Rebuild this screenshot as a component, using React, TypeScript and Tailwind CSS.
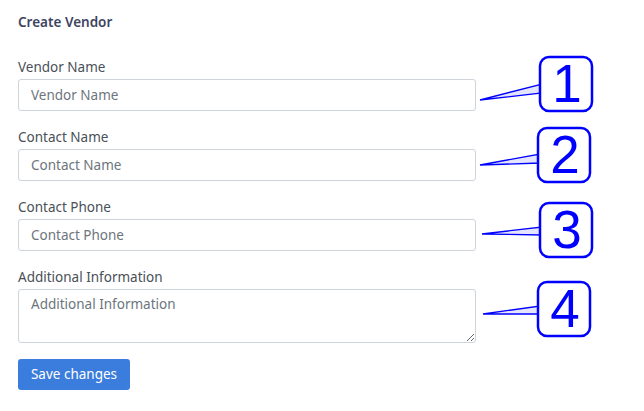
import React from 'react';

type Callout = {
  n: string;
  x: number;
  y: number;
  tipX: number;
  tipY: number;
  baseTop: number;
  baseBottom: number;
};

const callouts: Callout[] = [
  { n: '1', x: 540, y: 57, tipX: 480, tipY: 100, baseTop: 84, baseBottom: 93 },
  { n: '2', x: 538, y: 128, tipX: 480, tipY: 165, baseTop: 154, baseBottom: 163 },
  { n: '3', x: 540, y: 203, tipX: 482, tipY: 234, baseTop: 227, baseBottom: 235 },
  { n: '4', x: 538, y: 282, tipX: 483, tipY: 314, baseTop: 306, baseBottom: 314 },
];

const fields = [
  { label: 'Vendor Name', area: false },
  { label: 'Contact Name', area: false },
  { label: 'Contact Phone', area: false },
  { label: 'Additional Information', area: true },
];

const App = () => {
  return (
    <div className="relative w-[644px] h-[411px] bg-white font-['Noto_Sans',sans-serif] overflow-hidden">
      <div className="pl-[18px] pt-[12px] w-[476px]">
        <h1 className="text-[13.5px] leading-[20px] font-semibold text-[#3e4462]">Create Vendor</h1>
        <div className="mt-[25px] flex flex-col gap-[16px]">
          {fields.map((f) => (
            <div key={f.label} className="flex flex-col">
              <label className="text-[13.5px] leading-[21px] mb-[1px] text-[#495057]">{f.label}</label>
              {f.area ? (
                <textarea
                  placeholder={f.label}
                  className="h-[54px] w-full border border-[#ced4da] rounded-[3px] px-[12px] py-[4px] text-[13.5px] leading-[21px] placeholder:text-[#6c757d] outline-none"
                />
              ) : (
                <input
                  placeholder={f.label}
                  className="h-[32px] w-full border border-[#ced4da] rounded-[3px] px-[12px] text-[13.5px] placeholder:text-[#6c757d] outline-none"
                />
              )}
            </div>
          ))}
          <div>
            <button className="h-[31px] w-[112px] bg-[#3b7ddd] text-white text-[13.5px] rounded-[3px]">
              Save changes
            </button>
          </div>
        </div>
      </div>

      {/* annotation callouts */}
      <svg className="absolute left-0 top-0" width="644" height="411">
        {callouts.map((c) => (
          <g key={c.n}>
            <polygon
              points={`${c.tipX},${c.tipY} ${c.x + 2},${c.baseTop} ${c.x + 2},${c.baseBottom}`}
              fill="#e4e4ff"
              stroke="#0000ff"
              strokeWidth="1.3"
              strokeLinejoin="miter"
            />
            <rect x={c.x} y={c.y} width="52" height="54" rx="9" fill="white" stroke="#0000ff" strokeWidth="2.5" />
            <text
              x={c.x + 27}
              y={c.y + 45}
              textAnchor="middle"
              fontSize="53"
              fontFamily="Liberation Sans, Arial, sans-serif"
              fill="#0000ff"
            >
              {c.n}
            </text>
          </g>
        ))}
      </svg>
    </div>
  );
};

export default App;
